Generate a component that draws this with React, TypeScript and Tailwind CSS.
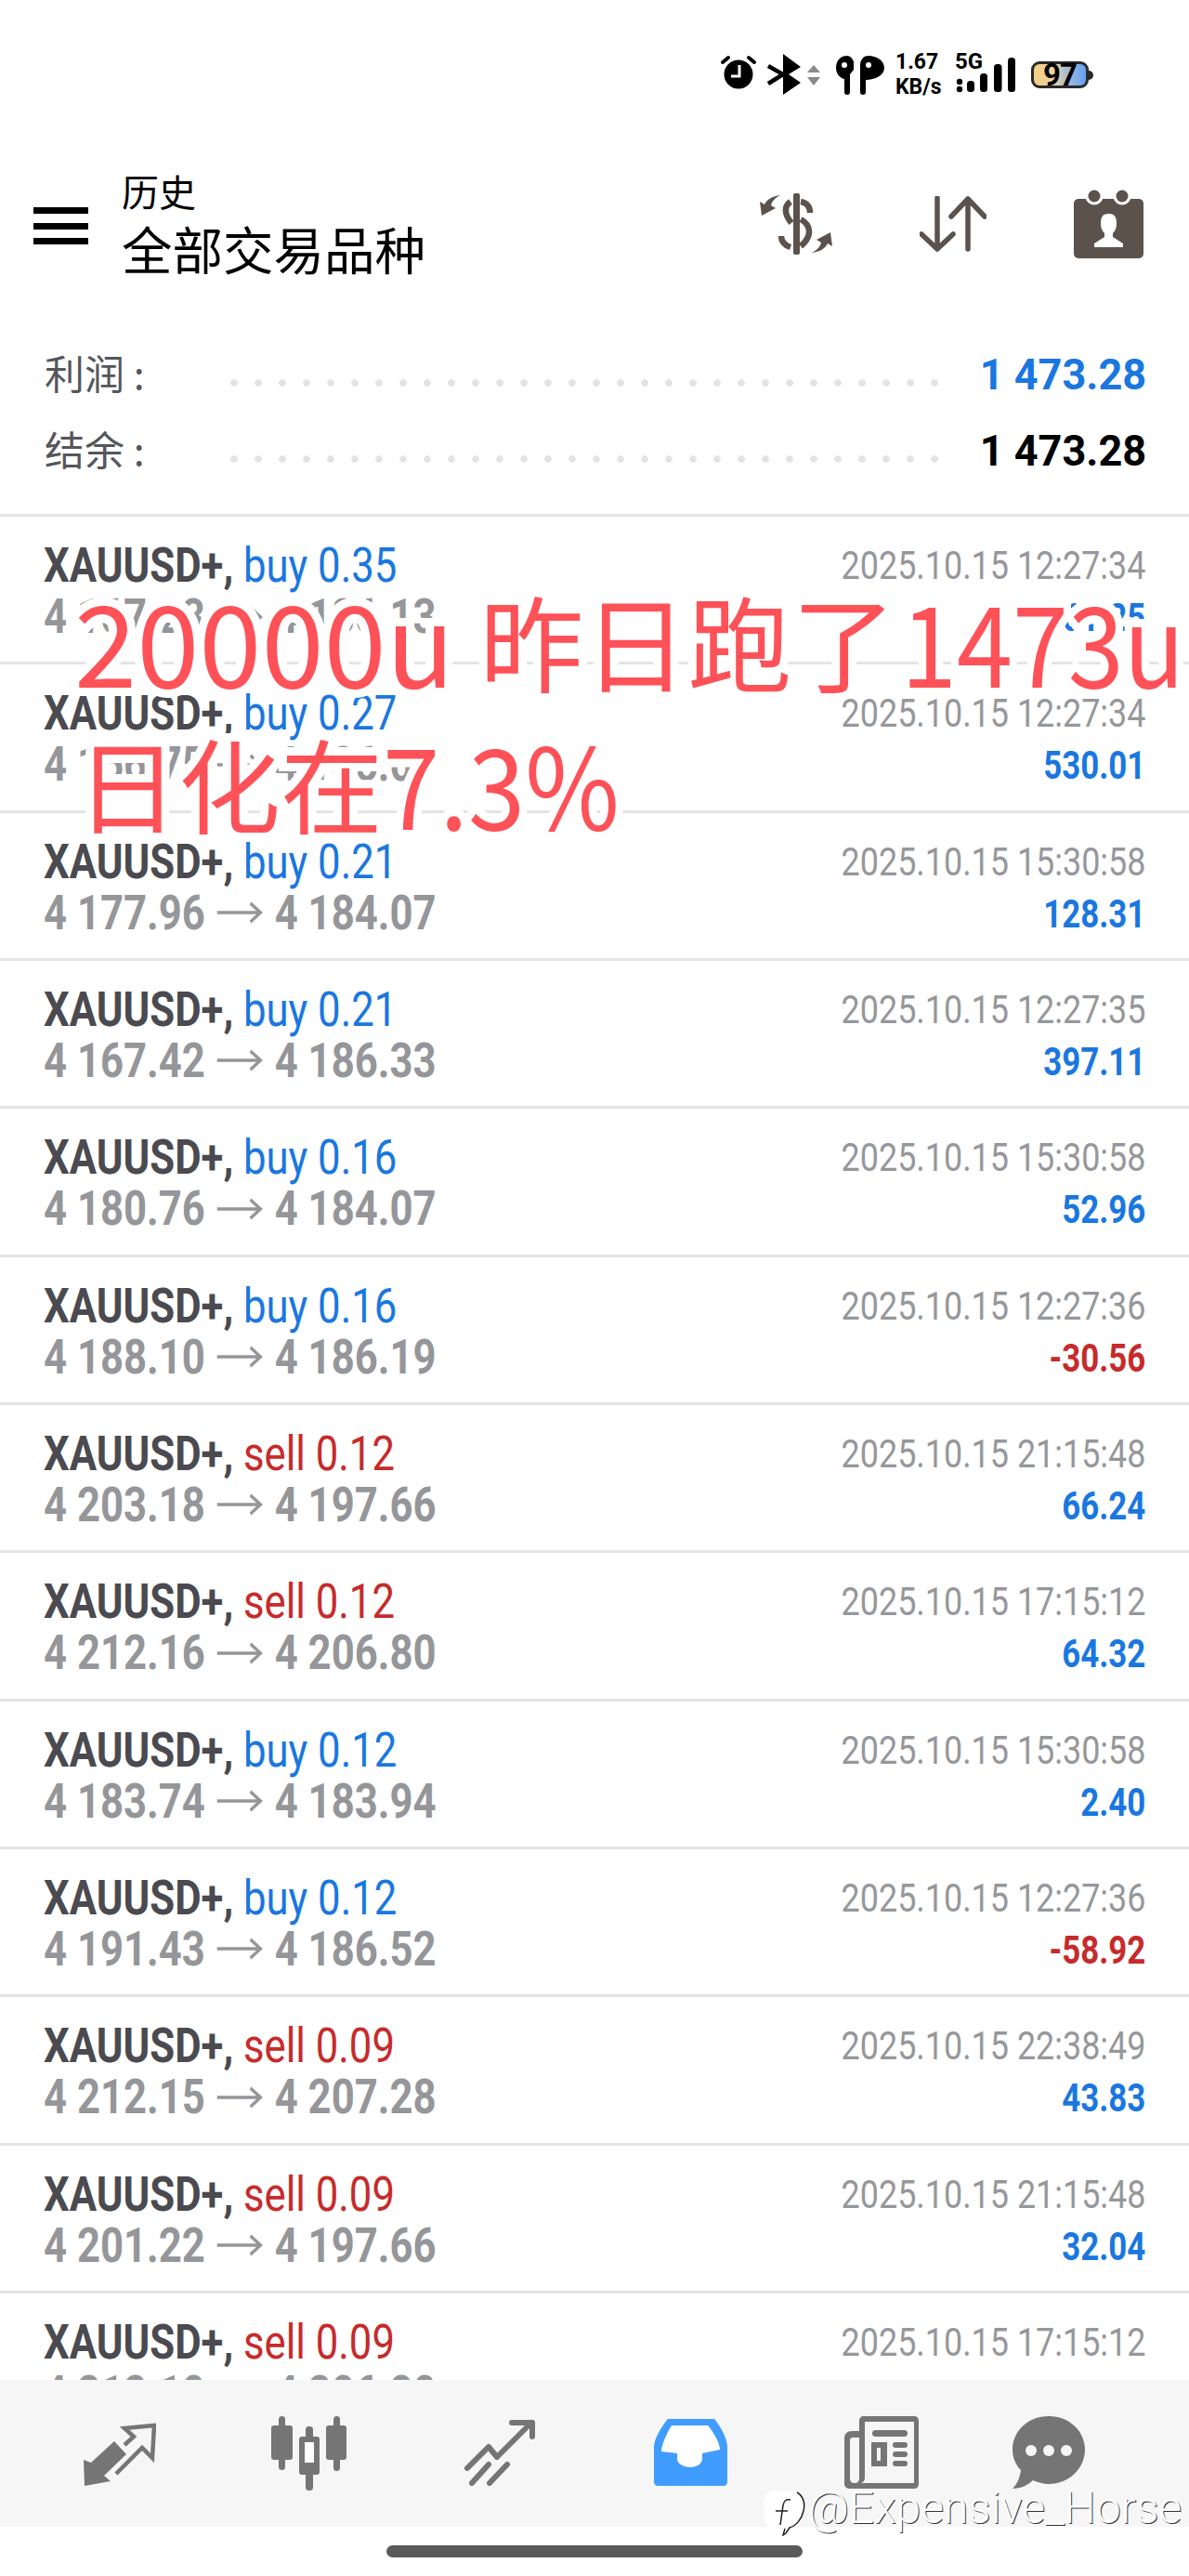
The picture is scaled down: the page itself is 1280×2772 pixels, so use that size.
const SANS = "font-['Noto_Sans_CJK_SC','Noto_Sans',sans-serif]"

type Trade = {
  side: 'buy' | 'sell'
  lots: string
  open: string
  close: string
  time: string
  profit: string
}

const trades: Trade[] = [
  { side: 'buy', lots: '0.35', open: '4 167.23', close: '4 186.13', time: '2025.10.15 12:27:34', profit: '661.25' },
  { side: 'buy', lots: '0.27', open: '4 166.75', close: '4 186.07', time: '2025.10.15 12:27:34', profit: '530.01' },
  { side: 'buy', lots: '0.21', open: '4 177.96', close: '4 184.07', time: '2025.10.15 15:30:58', profit: '128.31' },
  { side: 'buy', lots: '0.21', open: '4 167.42', close: '4 186.33', time: '2025.10.15 12:27:35', profit: '397.11' },
  { side: 'buy', lots: '0.16', open: '4 180.76', close: '4 184.07', time: '2025.10.15 15:30:58', profit: '52.96' },
  { side: 'buy', lots: '0.16', open: '4 188.10', close: '4 186.19', time: '2025.10.15 12:27:36', profit: '-30.56' },
  { side: 'sell', lots: '0.12', open: '4 203.18', close: '4 197.66', time: '2025.10.15 21:15:48', profit: '66.24' },
  { side: 'sell', lots: '0.12', open: '4 212.16', close: '4 206.80', time: '2025.10.15 17:15:12', profit: '64.32' },
  { side: 'buy', lots: '0.12', open: '4 183.74', close: '4 183.94', time: '2025.10.15 15:30:58', profit: '2.40' },
  { side: 'buy', lots: '0.12', open: '4 191.43', close: '4 186.52', time: '2025.10.15 12:27:36', profit: '-58.92' },
  { side: 'sell', lots: '0.09', open: '4 212.15', close: '4 207.28', time: '2025.10.15 22:38:49', profit: '43.83' },
  { side: 'sell', lots: '0.09', open: '4 201.22', close: '4 197.66', time: '2025.10.15 21:15:48', profit: '32.04' },
  { side: 'sell', lots: '0.09', open: '4 212.10', close: '4 206.80', time: '2025.10.15 17:15:12', profit: '47.70' },
]

function StatusBar() {
  return (
    <div className="h-[190px] flex items-start pt-[58px] pl-[775px] font-['Roboto',sans-serif] font-bold text-black">
      <svg width="177" height="44" viewBox="0 0 177 44" className="shrink-0">
        {/* alarm */}
        <circle cx="20" cy="22" r="15.500" fill="#000" />
        <path d="M3 9l6-5M37 9l-6-5" stroke="#000" strokeWidth="4" strokeLinecap="round" />
        <path d="M21 12v12h-9" stroke="#fff" strokeWidth="3" fill="none" />
        {/* bluetooth */}
        <path d="M68 0l19 14-13 8 13 9-19 13z" fill="#000" />
        <path d="M52 13l16 9-16 10" stroke="#000" strokeWidth="4.500" fill="none" />
        <path d="M101 12l7 8H94zM101 34l-7-9h14z" fill="#8a8a8a" />
        {/* earbuds */}
        <path d="M137 2c-8 0-12 6-12 13 0 6 4 11 9 12v14a3 3 0 0 0 6 0V22l4-5V8c-2-4-4-6-7-6z" fill="#000" />
        <circle cx="134" cy="12" r="3" fill="#fff" />
        <path d="M160 2c-6 0-9 5-9 10v29a3 3 0 0 0 6 0V28c10 0 20-5 20-13S168 2 160 2z" fill="#000" />
        <circle cx="160" cy="12" r="3" fill="#fff" />
      </svg>
      <div className="ml-[12px] w-[51px] shrink-0 -mt-[5px] text-[23px] leading-[27px] whitespace-nowrap">
        <div>1.67</div>
        <div>KB/s</div>
      </div>
      <div className="relative ml-[12px] w-[69px] h-[44px] shrink-0">
        <span className="absolute left-[1px] -top-[5px] text-[24px] leading-[27px]">5G</span>
        <svg width="69" height="44" viewBox="0 0 69 44">
          <circle cx="6" cy="30" r="3.200" fill="#000" />
          <circle cx="6" cy="38" r="3.200" fill="#000" />
          <rect x="14" y="29" width="8" height="12" rx="3.500" fill="#000" />
          <rect x="28" y="21" width="8" height="20" rx="3.500" fill="#000" />
          <rect x="43" y="11" width="8.500" height="30" rx="3.500" fill="#000" />
          <rect x="58" y="4" width="8" height="37" rx="3.500" fill="#000" />
        </svg>
      </div>
      <div className="relative ml-[14px] mt-[8px] w-[62px] h-[29px] shrink-0 rounded-[9px] border-[3px] border-[#2a2a2a] bg-[linear-gradient(90deg,#f2d084_0%,#ead3a0_42%,#a7bbd6_62%,#62a2f4_100%)] flex items-center justify-center">
        <span className="text-[33px] leading-none tracking-[-1px]">97</span>
        <span className="absolute -right-[8px] top-[7px] w-[5px] h-[10px] rounded-r-full bg-[#2a2a2a]" />
      </div>
    </div>
  )
}

function Toolbar() {
  return (
    <div className="h-[106px] flex items-center pl-[36px] pr-[49px]">
      <div className="w-[59px] flex flex-col gap-[9.500px] shrink-0">
        <span className="block h-[7px] bg-black" />
        <span className="block h-[7px] bg-black" />
        <span className="block h-[7px] bg-black" />
      </div>
      <div className={`ml-[36px] -mt-[7px] flex-1 ${SANS} text-black`}>
        <div className="text-[40px] leading-[46px]">历史</div>
        <div className="mt-[8px] text-[54.500px] leading-[62px]">全部交易品种</div>
      </div>
      <div className="flex items-center gap-[94px] -mt-[4px]">
        <svg width="78" height="66" viewBox="0 0 78 66" fill="#5b524c" className="shrink-0">
          <rect x="36" y="0" width="7" height="66" rx="2" />
          <g fill="none" stroke="#5b524c" strokeWidth="6.500">
            <path d="M44 9c6 1 10 5 10 12" />
            <path d="M33 9c-7 5-7 13 1 23" />
            <path d="M23 46c0 6 4 10 10 12" />
            <path d="M44 28c11 6 13 18 0 29" />
          </g>
          <path d="M22 2c-6 3-9 7-10 11l5 3-15 8-2-15 5 3c3-6 9-9 17-10z" />
          <path d="M22 2c-6 3-9 7-10 11l5 3-15 8-2-15 5 3c3-6 9-9 17-10z" transform="rotate(180 39 33)" />
        </svg>
        <svg width="72" height="60" viewBox="0 0 72 60" fill="none" stroke="#5b524c" strokeWidth="5.500" strokeLinecap="round" strokeLinejoin="round" className="shrink-0">
          <path d="M19 2v55M2 41l17 16 17-16" />
          <path d="M52 57V3M34 22L52 3l18 19" />
        </svg>
        <svg width="75" height="74" viewBox="0 0 75 74" fill="#5b524c" className="shrink-0">
          <rect x="0" y="10" width="75" height="64" rx="5" />
          <circle cx="22" cy="7" r="9.500" fill="#fff" />
          <circle cx="52" cy="7" r="9.500" fill="#fff" />
          <circle cx="22" cy="7" r="6.500" />
          <circle cx="52" cy="7" r="6.500" />
          <path d="M37 26c-6 0-8 4-8 10 0 5 1 8 4 11v4l-11 7v4h31v-4l-11-7v-4c3-3 4-6 4-11 0-6-2-10-8-10z" fill="#fff" />
        </svg>
      </div>
    </div>
  )
}

function Summary({ label, value, color }: { label: string; value: string; color: string }) {
  return (
    <div className="h-[82px] flex items-center pl-[48px] pr-[46px]">
      <span className={`${SANS} -mt-[6px] text-[43px] text-[#55565c] w-[191px] shrink-0 whitespace-nowrap`}>{label} :</span>
      <span className="w-[780px] shrink-0 h-[8px] mt-[18px] bg-[radial-gradient(circle,#e3e3e3_3.500px,transparent_4px)] bg-[length:26px_8px] bg-repeat-x" />
      <span className={`ml-auto font-['Roboto',sans-serif] font-bold text-[46px] leading-none whitespace-nowrap origin-right scale-x-[0.98] ${color}`}>{value}</span>
    </div>
  )
}

function TradeRow({ trade }: { trade: Trade }) {
  const loss = trade.profit.startsWith('-')
  return (
    <div className="h-[159.330px] border-t-[3px] border-[#e4e4e4] pl-[47px] pr-[47px] pt-[25px] flex justify-between font-['Roboto',sans-serif]">
      <div className="origin-left scale-x-[0.84] text-[52px] leading-[55px] whitespace-nowrap">
        <div>
          <span className="font-bold text-[#4a4a50]">XAUUSD+, </span>
          <span className={trade.side === 'buy' ? 'text-[#1a77df]' : 'text-[#c62b2b]'}>
            {trade.side} {trade.lots}
          </span>
        </div>
        <div className="flex items-center font-bold text-[#95969a]">
          <span>{trade.open}</span>
          <svg width="59" height="24" viewBox="0 0 59 24" fill="none" stroke="#95969a" strokeWidth="3.500" className="mx-[15px] shrink-0">
            <path d="M0 12h56M43 2l13 10-13 10" />
          </svg>
          <span>{trade.close}</span>
        </div>
      </div>
      <div className="text-right whitespace-nowrap">
        <div className="origin-right scale-x-[0.855] text-[42px] leading-[56px] text-[#96979b]">{trade.time}</div>
        <div className={`origin-right scale-x-[0.83] text-[42px] leading-[56px] font-bold ${loss ? 'text-[#c62b2b]' : 'text-[#1a77df]'}`}>{trade.profit}</div>
      </div>
    </div>
  )
}

function BottomNav() {
  return (
    <div className="absolute left-0 right-0 top-[2561px] h-[158px] bg-[#f6f6f6] flex items-start">
      <div className="w-[213px] pt-[46px] pl-[90px] shrink-0">
        <svg width="78" height="68" viewBox="0 0 78 68" fill="#757575">
          <path d="M0 40l8 3 25-23 13 14-24 23 7 6-28 5z" />
          <path d="M44 24l10-9-10-9 32-3-2 35-11-11-28 28" fill="none" stroke="#757575" strokeWidth="4.500" />
        </svg>
      </div>
      <div className="w-[213px] pt-[39px] pl-[79px] shrink-0">
        <svg width="81" height="80" viewBox="0 0 81 80" fill="#757575">
          <rect x="8" y="0" width="7" height="58" rx="3.500" />
          <rect x="0" y="10" width="23" height="37" rx="3" />
          <rect x="37" y="11" width="8" height="69" rx="3.500" />
          <rect x="30" y="22" width="22" height="41" rx="3" />
          <rect x="36" y="28" width="10" height="22" fill="#fff" />
          <rect x="67" y="0" width="7" height="59" rx="3.500" />
          <rect x="59" y="10" width="22" height="37" rx="3" />
        </svg>
      </div>
      <div className="w-[213px] pt-[42px] pl-[74px] shrink-0">
        <svg width="76" height="72" viewBox="0 0 76 72" fill="none" stroke="#757575" strokeWidth="6" strokeLinecap="round" strokeLinejoin="round">
          <path d="M3 53l23-23 9 11 37-37" />
          <path d="M51 4h22v15" />
          <path d="M26 49L8 69M46 49L27 69" />
        </svg>
      </div>
      <div className="w-[213px] pt-[42px] pl-[65px] shrink-0">
        <svg width="79" height="72" viewBox="0 0 79 72">
          <path d="M15 0h50c7 8 14 22 14 30v38c0 2-2 4-4 4H4c-2 0-4-2-4-4V30C0 22 8 8 15 0z" fill="#409cff" />
          <path d="M19 7h39c6 7 13 19 13 26l-19 4v6c0 5-6 9-13 9s-14-4-14-9v-6L8 35c0-7 6-20 11-28z" fill="#fff" />
        </svg>
      </div>
      <div className="w-[213px] pt-[39px] pl-[57px] shrink-0">
        <svg width="80" height="78" viewBox="0 0 80 78" fill="#757575">
          <path d="M16 5c0-3 2-5 5-5h54c3 0 5 2 5 5v68c0 3-2 5-5 5H6c-3 0-6-2-6-5V24c0-5 3-8 8-8h8zM22 6v60c0 3-2 6-5 6h58V6zM16 23H9c-2 0-3 1-3 3v41c0 3 2 5 5 5s5-2 5-5z" fillRule="evenodd" />
          <rect x="30" y="15" width="38" height="7" rx="3.500" />
          <path d="M29 28h17v26H29zM35 34v14h4V34z" fillRule="evenodd" />
          <rect x="52" y="28" width="16" height="6" rx="3" />
          <rect x="52" y="38" width="16" height="6" rx="3" />
          <rect x="52" y="48" width="16" height="6" rx="3" />
        </svg>
      </div>
      <div className="w-[215px] pt-[39px] pl-[25px] shrink-0">
        <svg width="78" height="78" viewBox="0 0 78 78" fill="#757575">
          <path d="M39 0c22 0 39 16 39 36S61 73 39 73c-6 0-12-2-17-4-5 5-13 9-22 9 5-5 8-12 9-20C3 52 0 44 0 36 0 16 17 0 39 0z" />
          <circle cx="20" cy="37" r="6" fill="#f6f6f6" />
          <circle cx="39" cy="37" r="6" fill="#f6f6f6" />
          <circle cx="58" cy="37" r="6" fill="#f6f6f6" />
        </svg>
      </div>
    </div>
  )
}

export default function App() {
  return (
    <div className="relative w-[1280px] h-[2772px] bg-white overflow-hidden">
      <StatusBar />
      <Toolbar />
      <div className="h-[66px]" />
      <Summary label="利润" value="1 473.28" color="text-[#1a77df]" />
      <Summary label="结余" value="1 473.28" color="text-black" />
      <div className="mt-[27px]">
        {trades.map((t, i) => (
          <TradeRow key={i} trade={t} />
        ))}
      </div>

      {/* red note pasted over the list, with a white halo that eats the rows under it */}
      <div className={`absolute left-[80px] top-[618px] flex items-center whitespace-nowrap leading-[140px] text-[#ff5158] ${SANS} [-webkit-text-stroke:18px_white] [paint-order:stroke_fill]`}>
        <span className="text-[121px]">20000u</span>
        <span className="ml-[27px] text-[112px]">昨日跑了</span>
        <span className="ml-[6px] text-[120px] inline-block origin-left scale-x-[0.9]">1473u</span>
      </div>
      <div className={`absolute left-[82px] top-[771px] flex items-center whitespace-nowrap leading-[140px] text-[#ff5158] ${SANS} [-webkit-text-stroke:18px_white] [paint-order:stroke_fill]`}>
        <span className="text-[110px]">日化在</span>
        <span className="text-[120px] inline-block origin-left scale-x-[0.92]">7.3%</span>
      </div>

      <BottomNav />

      {/* home bar */}
      <div className="absolute left-[416px] top-[2739px] w-[448px] h-[13px] rounded-full bg-[#5a5a5a]" />

      {/* watermark */}
      <div className="absolute left-[822px] top-[2680px] w-[42px] h-[40px] rounded-[12px] bg-white" />
      <svg width="36" height="48" viewBox="0 0 36 48" fill="none" stroke="#222" strokeWidth="1.500" className="absolute left-[832px] top-[2681px]">
        <path d="M26 1c7 4 9 12 7 20-2 9-8 16-15 18l-4 6-3 2 2-7" />
        <path d="M19 9c-5-1-7 1-8 6l-3 21M3 21h13" />
      </svg>
      <div className="absolute left-[870px] top-[2671px] whitespace-nowrap text-[48px] leading-[56px] font-light text-white font-['Roboto',sans-serif] [text-shadow:1px_1px_0_#333]">
        @Expensive_Horse
      </div>
    </div>
  )
}
